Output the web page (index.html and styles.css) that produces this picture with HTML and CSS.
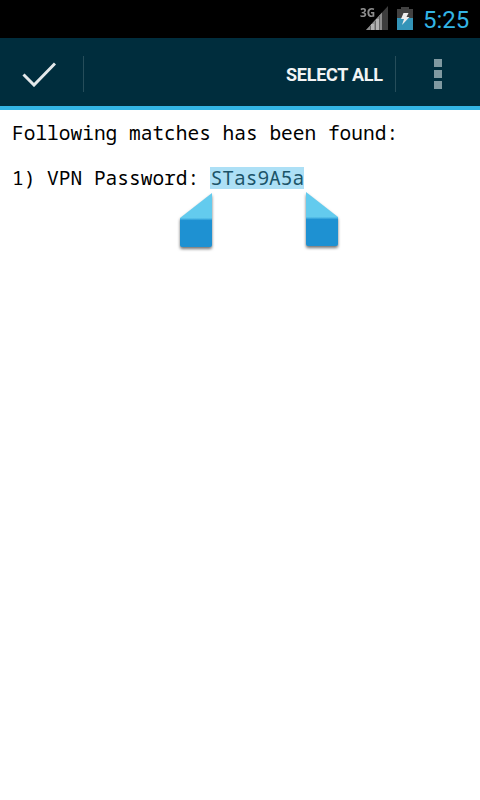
FILE: index.html
```
<!DOCTYPE html>
<html lang="en">
<head>
<meta charset="utf-8">
<title>Matches</title>
<link rel="stylesheet" href="styles.css">
</head>
<body>
<header class="status">
  <svg class="signal" width="22" height="24" viewBox="0 0 22 24">
    <path d="M0 24 22 0V24Z" fill="#3d3d3d"/>
    <path d="M0 24 16 6.500V24Z" fill="#8d8d8d"/>
    <path d="M6.500 18v6M11.500 13v11" stroke="#b2b2b2" stroke-width="3"/>
    <path d="M4.500 20v4M9.500 15v9M13.500 10v14" stroke="#666" stroke-width="1"/>
  </svg>
  <span class="network">3G</span>
  <svg class="battery" width="16" height="24" viewBox="0 0 16 24">
    <path d="M4 0h8v2h4v9H0V2h4Z" fill="#424242"/>
    <path d="M0 11h16v12H0Z" fill="#3394b8"/>
    <path d="M6.500 6h5l-2 4h3L5 18l2-6H4Z" fill="#eee"/>
  </svg>
  <time class="clock">5:25</time>
</header>
<nav class="actions">
  <button class="done" aria-label="Done"><svg width="34" height="26" viewBox="0 0 34 26"><path d="M1.500 13.500 12 24 33 2.500" fill="none" stroke="#e3e8ea" stroke-width="3"/></svg></button>
  <button class="select">SELECT ALL</button>
  <button class="more" aria-label="More options"><i></i><i></i><i></i></button>
</nav>
<main class="content">
  <p>Following matches has been found:</p>
  <p>1) VPN Password: <span class="selected">STas9A5a<svg class="handle start" width="40" height="62" viewBox="0 0 40 62"><use href="#grip"/></svg><svg class="handle end" width="40" height="62" viewBox="0 0 40 62">
    <defs>
      <linearGradient id="blue" x1="0" y1="4" x2="0" y2="58" gradientUnits="userSpaceOnUse"><stop offset="0" stop-color="#63cbee"/><stop offset=".46" stop-color="#63cbee"/><stop offset=".51" stop-color="#1e91d2"/><stop offset="1" stop-color="#1e91d2"/></linearGradient>
      <path id="grip" d="M4 4 36 29V56Q36 58 34 58H6Q4 58 4 56Z" fill="url(#blue)"/>
    </defs>
    <use href="#grip"/></svg></span></p>
</main>
</body>
</html>
```
FILE: styles.css
```
* { box-sizing: border-box; }
body { margin: 0; width: 480px; height: 800px; background: #fff; overflow: hidden; }
.status {
  position: relative; height: 38px; background: #000;
  display: flex; justify-content: flex-end; align-items: flex-start;
  padding: 6px 10px 0 0; font-family: Roboto, sans-serif;
}
.network {
  position: absolute; left: 360px; top: 5px;
  font: bold 13px/15px "Open Sans", sans-serif; color: #8e8e8e;
  transform: scaleX(.9); transform-origin: left;
}
.battery { margin: 1px 10px 0 9px; }
.clock { width: 47px; color: #33b5e5; font-size: 24px; line-height: 28px; white-space: nowrap; }
.actions {
  height: 72px; background: #002d3d; border-bottom: 4px solid #33b5e5;
  display: flex; align-items: center; padding-top: 4px;
}
button { padding: 0; border: 0; background: none; color: inherit; }
.done {
  width: 84px; height: 36px; border-right: 1px solid #264d5a;
  display: flex; align-items: center; padding-left: 22px;
}
.select {
  margin-left: auto; width: 110px; height: 36px; padding-top: 1px; text-align: left;
  border-right: 1px solid #264d5a; color: #f2f4f5;
  font: bold 18px/36px Roboto, sans-serif; letter-spacing: -.25px; white-space: nowrap;
}
.more { width: 84px; display: flex; flex-direction: column; align-items: center; gap: 3px; }
.more i { width: 8px; height: 8px; background: #8099a1; }
.content {
  padding: 12px 12px; color: #000; white-space: nowrap;
  font-family: "Droid Sans Mono", "Noto Sans Mono", "DejaVu Sans Mono", monospace;
  font-size: 19.5px; line-height: 22px;
}
.content p { margin: 0 0 23px; }
.selected { position: relative; display: inline-block; width: 94px; height: 22px; margin-left: -1px; padding-left: .7px; background: #ade0f6; color: #1b5469; vertical-align: top; }
.handle { position: absolute; filter: drop-shadow(0 2px 1.5px rgba(0, 0, 0, .55)); }
.handle.start { left: -34px; top: 21.500px; transform: scaleX(-1); }
.handle.end { left: 92px; top: 20.500px; }
```
